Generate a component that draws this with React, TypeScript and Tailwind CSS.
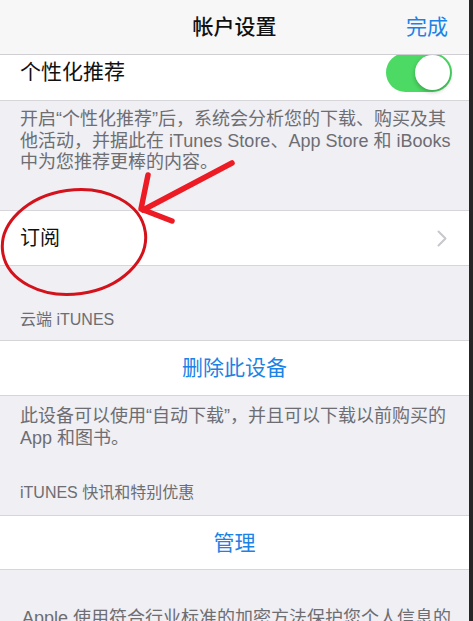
import React from 'react';

const font = "font-['Liberation_Sans','Noto_Sans_CJK_SC',sans-serif]";

const Toggle = () => (
  <div className="relative w-[66px] h-[39px] rounded-full bg-[#4cd964]">
    <div className="absolute right-[2px] top-[2px] w-[35px] h-[35px] rounded-full bg-white shadow-[0_2px_4px_rgba(0,0,0,0.25)]" />
  </div>
);

const Chevron = () => (
  <svg width="10" height="17" viewBox="0 0 10 17" fill="none">
    <path d="M1.5 1.5 L8.5 8.5 L1.5 15.5" stroke="#c7c7cc" strokeWidth="2" strokeLinecap="round" strokeLinejoin="round" />
  </svg>
);

const Annotation = () => (
  <svg className="absolute left-0 top-0 pointer-events-none" width="473" height="621" viewBox="0 0 473 621">
    <ellipse cx="74" cy="242" rx="72" ry="52" transform="rotate(-8 74 242)" fill="none" stroke="#d3121c" strokeWidth="3" />
    <path d="M232 163 L143 210" stroke="#ec1b24" strokeWidth="5.5" strokeLinecap="round" />
    <path d="M148 175 L141 209 L172 221" fill="none" stroke="#ec1b24" strokeWidth="5.5" strokeLinecap="round" strokeLinejoin="round" />
  </svg>
);

const App = () => {
  return (
    <div className={`relative flex w-[473px] h-[621px] overflow-hidden ${font}`}>
      <div className="w-[469px] bg-[#efeff4] flex flex-col">
        <div className="relative z-10 h-[55px] shrink-0 bg-[#f7f7f8] border-b border-[#cfcfd3] flex items-center justify-center">
          <span className="text-[21px] font-medium text-[#111]">帐户设置</span>
          <span className="absolute right-[21px] text-[21px] text-[#1b82e6]">完成</span>
        </div>

        <div className="h-[46px] shrink-0 overflow-hidden bg-white border-b border-[#d6d6da]">
          <div className="-mt-[11px] h-[56px] flex items-center justify-between pl-[20px] pr-[17px]">
            <span className="text-[21px] text-[#111]">个性化推荐</span>
            <Toggle />
          </div>
        </div>

        <p className="pt-[8px] px-[20px] text-[18px] leading-[21.5px] text-[#6d6d72] h-[109px] shrink-0 whitespace-nowrap">
          开启“个性化推荐”后，系统会分析您的下载、购买及其<br />
          他活动，并据此在 iTunes Store、App Store 和 iBooks<br />
          中为您推荐更棒的内容。
        </p>

        <div className="h-[56px] shrink-0 bg-white border-y border-[#d6d6da] flex items-center justify-between pl-[20px] pr-[22px]">
          <span className="text-[20px] text-[#111]">订阅</span>
          <Chevron />
        </div>

        <div className="h-[74px] shrink-0 flex items-end pb-[10px] px-[20px] text-[16px] leading-[20px] text-[#6d6d72]">
          云端 iTUNES
        </div>

        <div className="h-[56px] shrink-0 bg-white border-y border-[#d6d6da] flex items-center justify-center">
          <span className="text-[21px] text-[#1b82e6]">删除此设备</span>
        </div>

        <p className="pt-[9px] px-[20px] text-[18px] leading-[22px] text-[#6d6d72] h-[53px] shrink-0 whitespace-nowrap">
          此设备可以使用“自动下载”，并且可以下载以前购买的<br />
          App 和图书。
        </p>

        <div className="h-[66px] shrink-0 flex items-end pb-[12px] px-[20px] text-[16px] leading-[20px] text-[#6d6d72]">
          iTUNES 快讯和特别优惠
        </div>

        <div className="h-[55px] shrink-0 bg-white border-y border-[#d6d6da] flex items-center justify-center">
          <span className="text-[21px] text-[#1b82e6]">管理</span>
        </div>

        <p className="pt-[37px] px-[22px] text-[18px] leading-[22px] text-[#6d6d72] whitespace-nowrap">
          Apple 使用符合行业标准的加密方法保护您个人信息的
        </p>
      </div>
      <div className="flex-1 bg-[#262626]" />
      <Annotation />
    </div>
  );
};

export default App;
